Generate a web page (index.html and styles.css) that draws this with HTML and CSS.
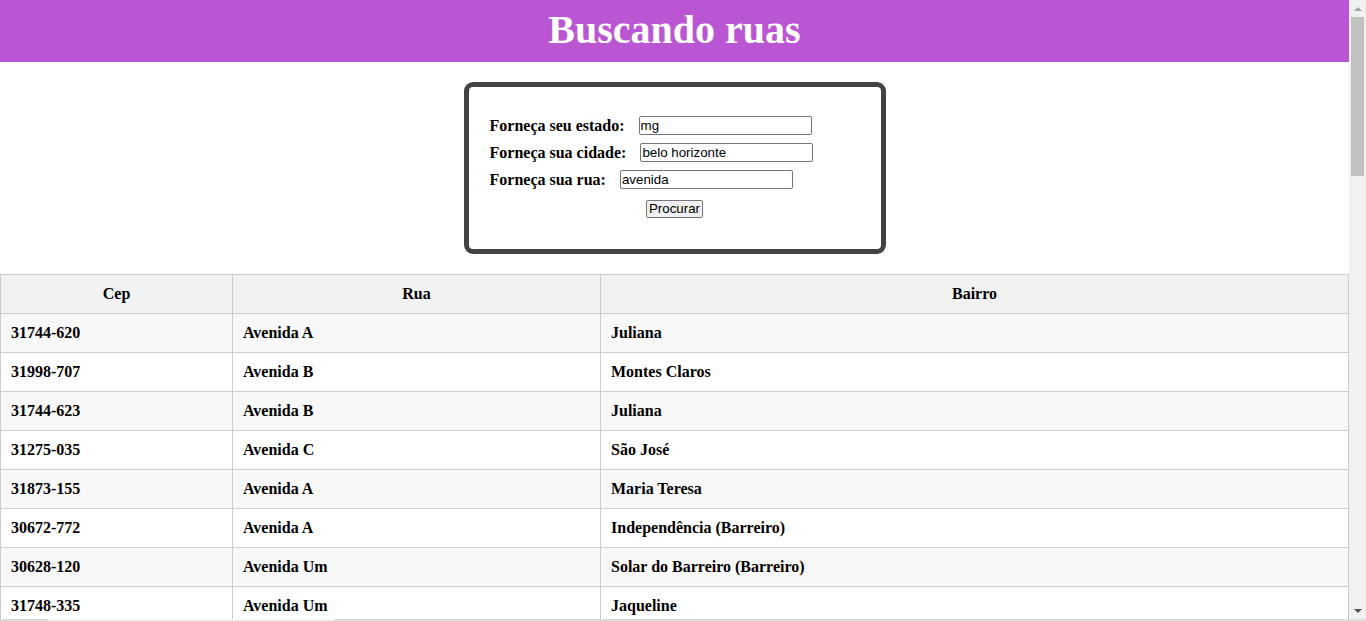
FILE: index.html
```html
<!DOCTYPE html>
<html lang="pt-BR">
<head>
<meta charset="utf-8">
<title>Buscando ruas</title>
<link rel="stylesheet" href="styles.css">
</head>
<body>
<div class="viewport">
  <div class="page">
    <header class="top">
      <h1 class="title">Buscando ruas</h1>
    </header>
    <main>
      <form class="search-box">
        <div class="row"><label class="lbl" for="uf">Forneça seu estado:</label><input class="field" id="uf" type="text" value="mg"></div>
        <div class="row"><label class="lbl" for="cidade">Forneça sua cidade:</label><input class="field" id="cidade" type="text" value="belo horizonte"></div>
        <div class="row"><label class="lbl" for="rua">Forneça sua rua:</label><input class="field" id="rua" type="text" value="avenida"></div>
        <div class="actions"><button class="btn" type="button">Procurar</button></div>
      </form>
      <table class="results">
        <colgroup><col class="c-cep"><col class="c-rua"><col class="c-bairro"></colgroup>
        <thead>
          <tr><th>Cep</th><th>Rua</th><th>Bairro</th></tr>
        </thead>
        <tbody>
          <tr><td>31744-620</td><td>Avenida A</td><td>Juliana</td></tr>
          <tr><td>31998-707</td><td>Avenida B</td><td>Montes Claros</td></tr>
          <tr><td>31744-623</td><td>Avenida B</td><td>Juliana</td></tr>
          <tr><td>31275-035</td><td>Avenida C</td><td>São José</td></tr>
          <tr><td>31873-155</td><td>Avenida A</td><td>Maria Teresa</td></tr>
          <tr><td>30672-772</td><td>Avenida A</td><td>Independência (Barreiro)</td></tr>
          <tr><td>30628-120</td><td>Avenida Um</td><td>Solar do Barreiro (Barreiro)</td></tr>
          <tr><td>31748-335</td><td>Avenida Um</td><td>Jaqueline</td></tr>
          <tr><td>30668-040</td><td>Avenida Dois</td><td>Vale do Jatobá (Barreiro)</td></tr>
          <tr><td>31230-000</td><td>Avenida Três</td><td>Paquetá</td></tr>
        </tbody>
      </table>
    </main>
  </div>
  <div class="vscroll" aria-hidden="true">
    <div class="vs-btn"><span class="arrow-up"></span></div>
    <div class="vs-thumb"></div>
    <div class="vs-track"></div>
    <div class="vs-btn"><span class="arrow-down"></span></div>
  </div>
</div>
<div class="hscroll" aria-hidden="true"><div class="hs-gap"></div><div class="hs-thumb"></div></div>
</body>
</html>
```
FILE: styles.css
```css
html, body {
  margin: 0;
  padding: 0;
  height: 100%;
  overflow: hidden;
}
body {
  font-family: "Liberation Serif", "Times New Roman", serif;
  font-size: 16px;
  color: #000;
  background: #fff;
  display: flex;
  flex-direction: column;
}
.viewport {
  flex: 1;
  min-height: 0;
  display: flex;
}
.page {
  flex: 1;
  min-width: 0;
  overflow: hidden;
}
.vscroll {
  width: 17px;
  flex: none;
  background: #f1f1f1;
  display: flex;
  flex-direction: column;
}
.vs-btn {
  height: 17px;
  display: flex;
  align-items: center;
  justify-content: center;
}
.arrow-up {
  width: 0;
  height: 0;
  border-left: 4px solid transparent;
  border-right: 4px solid transparent;
  border-bottom: 4px solid #a3a3a3;
}
.arrow-down {
  width: 0;
  height: 0;
  border-left: 4px solid transparent;
  border-right: 4px solid transparent;
  border-top: 4px solid #505050;
}
.vs-thumb {
  height: 159px;
  margin: 0 2px;
  background: #c1c1c1;
}
.vs-track {
  flex: 1;
}
.hscroll {
  height: 2px;
  flex: none;
  background: #dcdcdc;
  display: flex;
}
.hs-gap {
  width: 48px;
}
.hs-thumb {
  width: 287px;
  background: #f1f1f1;
}
.top {
  background: #ba55d3;
  height: 62px;
  box-sizing: border-box;
  padding-top: 6px;
  text-align: center;
}
.title {
  margin: 0;
  font-size: 40px;
  font-weight: bold;
  color: #fff;
  line-height: normal;
}
.search-box {
  width: 422px;
  box-sizing: border-box;
  margin: 20px auto;
  border: 5px solid #434343;
  border-radius: 9px;
  padding: 25px 21px 31px 21px;
}
.row {
  height: 27px;
  display: flex;
  align-items: center;
}
.lbl {
  font-weight: bold;
  margin-right: 14px;
}
.field {
  width: 173px;
  height: 19px;
  box-sizing: border-box;
  border: 1px solid #767676;
  border-radius: 2px;
  padding: 0 1px;
  font-family: "Liberation Sans", Arial, sans-serif;
  font-size: 13.33px;
  color: #000;
  background: #fff;
}
.actions {
  margin-top: 7px;
  display: flex;
  justify-content: center;
}
.btn {
  height: 18px;
  box-sizing: border-box;
  padding: 0 2px;
  border: 1px solid #767676;
  border-radius: 2px;
  background: #efefef;
  font-family: "Liberation Sans", Arial, sans-serif;
  font-size: 13.33px;
  line-height: 14px;
  color: #000;
}
.results {
  width: 100%;
  border-collapse: collapse;
  table-layout: fixed;
}
.c-cep { width: 232px; }
.c-rua { width: 368px; }
.results th,
.results td {
  border: 1px solid #cccccc;
  padding: 10px;
  line-height: 18px;
  font-weight: bold;
  text-align: left;
}
.results th {
  background: #f2f2f2;
  text-align: center;
}
.results tbody tr:nth-child(odd) {
  background: #f8f8f8;
}
.results tbody tr:nth-child(even) {
  background: #fff;
}
```
